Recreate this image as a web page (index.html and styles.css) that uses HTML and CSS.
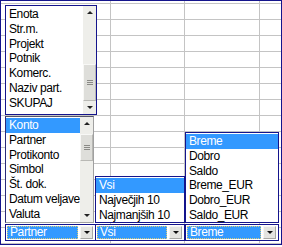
FILE: index.html
```html
<!DOCTYPE html>
<html lang="sl">

<head>
  <meta charset="utf-8">
  <title>pivot</title>
  <link rel="stylesheet" href="styles.css">
</head>

<body>

  <div class="sheet">

    <div class="col col-a">
      <div class="listbox lb-fields">
        <ul class="items">
          <li>Enota</li>
          <li>Str.m.</li>
          <li>Projekt</li>
          <li>Potnik</li>
          <li>Komerc.</li>
          <li>Naziv part.</li>
          <li>SKUPAJ</li>
        </ul>
        <div class="scroll">
          <div class="arrow up"></div>
          <div class="track track-fields">
            <div class="thumb"><span class="grip"></span></div>
          </div>
          <div class="arrow down"></div>
        </div>
      </div>

      <div class="listbox lb-rows">
        <ul class="items">
          <li class="sel">Konto</li>
          <li>Partner</li>
          <li>Protikonto</li>
          <li>Simbol</li>
          <li>Št. dok.</li>
          <li>Datum veljave</li>
          <li>Valuta</li>
        </ul>
        <div class="scroll">
          <div class="arrow up"></div>
          <div class="track track-rows">
            <div class="thumb"><span class="grip"></span></div>
          </div>
          <div class="arrow down"></div>
        </div>
      </div>

      <div class="combo">
        <span class="value">Partner</span>
        <span class="drop"></span>
      </div>
    </div>

    <div class="col col-b">
      <div class="listbox lb-top">
        <ul class="items">
          <li class="sel">Vsi</li>
          <li>Največjih 10</li>
          <li>Najmanjših 10</li>
        </ul>
      </div>
      <div class="combo">
        <span class="value">Vsi</span>
        <span class="drop"></span>
      </div>
    </div>

    <div class="col col-c">
      <div class="listbox lb-values">
        <ul class="items">
          <li class="sel">Breme</li>
          <li>Dobro</li>
          <li>Saldo</li>
          <li>Breme_EUR</li>
          <li>Dobro_EUR</li>
          <li>Saldo_EUR</li>
        </ul>
      </div>
      <div class="combo">
        <span class="value">Breme</span>
        <span class="drop"></span>
      </div>
    </div>

  </div>

</body>

</html>
```

FILE: styles.css
```css
/* ******************** global ******************* */

* {
  box-sizing: border-box;
}

html,
body {
  margin: 0;
  padding: 0;
  background: white;
}

body {
  font-family: "Liberation Sans", Arial, sans-serif;
  font-size: 12px;
  letter-spacing: -0.4px;
  color: black;
}

/* ******************** sheet ******************* */

.sheet {
  display: flex;
  align-items: flex-end;
  width: 282px;
  height: 245px;
  padding: 0 2px 3px 4px;
  border: 1px solid #14148c;
  background-color: white;
  background-image:
    linear-gradient(to right, transparent 109px, #c4c4c4 109px, #c4c4c4 110px, transparent 110px,
      transparent 183px, #c4c4c4 183px, #c4c4c4 184px, transparent 184px,
      transparent 258px, #c4c4c4 258px, #c4c4c4 259px, transparent 259px),
    linear-gradient(to bottom, #c4c4c4 0, #c4c4c4 1px, transparent 1px);
  background-size: 100% 100%, 100% 16px;
  background-position: 0 0, 0 2px;
}

.col {
  display: flex;
  flex-direction: column;
  gap: 1px;
}

.col-a {
  width: 91px;
}

.col-b {
  width: 90px;
  margin-left: -1px;
}

.col-c {
  width: 94px;
}

/* ******************** listbox ******************* */

.listbox {
  display: flex;
  background: white;
  border: 1px solid #14148c;
}

.lb-fields {
  height: 110px;
  margin-right: -1px;
}

.lb-rows {
  height: 107px;
  border-color: #55556a #a0a0a0 #a0a0a0 #2a2a7a;
  margin-right: 2px;
}

.lb-top {
  height: 47px;
}

.lb-values {
  height: 91px;
}

.items {
  flex: 1;
  margin: 0;
  padding: 1px 0 0;
  list-style: none;
  overflow: hidden;
}

.items li {
  height: 14.8px;
  line-height: 14.8px;
  padding-left: 3px;
  white-space: nowrap;
}

.items li.sel {
  background: #3399ff;
  color: white;
}

/* ******************** scrollbar ******************* */

.scroll {
  display: flex;
  flex-direction: column;
  width: 13px;
  background: #eeeeea;
}

.arrow {
  position: relative;
  height: 13px;
}

.arrow::after {
  content: "";
  position: absolute;
  left: 4px;
  top: 5px;
  border-left: 3px solid transparent;
  border-right: 3px solid transparent;
}

.arrow.up::after {
  border-bottom: 3px solid #222;
}

.arrow.down::after {
  border-top: 3px solid #222;
}

.track {
  flex: 1;
  display: flex;
  flex-direction: column;
}

.track-fields {
  justify-content: flex-end;
}

.track-rows {
  padding-top: 4px;
}

.thumb {
  display: flex;
  align-items: center;
  justify-content: center;
  height: 37px;
  background: #dededa;
  border: 1px solid #f8f8f6;
  border-right-color: #b8b8b4;
  border-bottom-color: #b8b8b4;
}

.track-rows .thumb {
  height: 27px;
}

.grip {
  width: 6px;
  height: 5px;
  border-top: 1px solid #8a8a86;
  border-bottom: 1px solid #8a8a86;
  background: linear-gradient(#8a8a86, #8a8a86) center / 100% 1px no-repeat;
}

/* ******************** combo ******************* */

.combo {
  display: flex;
  align-items: center;
  gap: 2px;
  height: 17px;
  padding: 1px 2px 1px 1px;
  background: white;
  border: 1px solid #14148c;
}

.value {
  flex: 1;
  height: 13px;
  line-height: 11px;
  padding-left: 2px;
  background: #3399ff;
  color: white;
  border: 1px dotted #d8cc7a;
}

.drop {
  position: relative;
  width: 13px;
  height: 13px;
  background: #e4e4e0;
  border: 1px solid #f6f6f4;
  border-right-color: #a8a8a4;
  border-bottom-color: #a8a8a4;
}

.drop::after {
  content: "";
  position: absolute;
  left: 3px;
  top: 4px;
  border-left: 3px solid transparent;
  border-right: 3px solid transparent;
  border-top: 3px solid #111;
}
```
